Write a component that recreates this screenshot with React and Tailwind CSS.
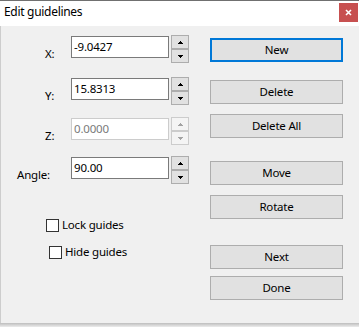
const font = "font-['Segoe_UI','Noto_Sans',sans-serif] text-[11.5px] leading-4 tracking-[-0.2px]";

const Arrow = ({ down, disabled }) => (
  <svg width="5" height="3" viewBox="0 0 5 3" shapeRendering="crispEdges" className={down ? "rotate-180" : ""}>
    <g fill={disabled ? "#a3a3a3" : "#000"}>
      <rect x="2" y="0" width="1" height="1" />
      <rect x="1" y="1" width="3" height="1" />
      <rect x="0" y="2" width="5" height="1" />
    </g>
  </svg>
);

const Spinner = ({ disabled }) => {
  const box = disabled
    ? "h-[14px] border border-[#cccccc] bg-[#f4f4f4] flex items-center justify-center"
    : "h-[14px] border border-[#adadad] bg-[#e1e1e1] flex items-center justify-center";
  return (
    <div className="flex flex-col w-[18px] ml-[2px]">
      <div className={box}>
        <Arrow disabled={disabled} />
      </div>
      <div className={box}>
        <Arrow down disabled={disabled} />
      </div>
    </div>
  );
};

const Field = ({ label, pad, value, disabled, top }) => (
  <div className={`flex items-start h-[28px] ${top}`}>
    <div className={`w-[70px] mt-[11px] text-black ${pad}`}>{label}</div>
    <div
      className={`w-[98px] h-[22px] mt-[1px] border bg-white pl-[2px] flex items-center ${
        disabled ? "border-[#cccccc] text-[#7a7a7a]" : "border-[#7a7a7a] text-black"
      }`}
    >
      {value}
    </div>
    <Spinner disabled={disabled} />
  </div>
);

const Button = ({ children, top, focus }) => (
  <div
    className={`h-[24px] flex items-center justify-center bg-[#e1e1e1] text-black ${top} ${
      focus ? "border-2 border-[#0078d7]" : "border border-[#adadad]"
    }`}
  >
    {children}
  </div>
);

const Check = ({ label, left, top }) => (
  <div className={`flex items-center ${left} ${top}`}>
    <div className="w-[13px] h-[13px] border border-[#333333] bg-white" />
    <span className="ml-[3px] text-black">{label}</span>
  </div>
);

export default function App() {
  return (
    <div className={`w-[359px] h-[327px] bg-white ${font}`}>
      <div className="h-[26px] bg-white border-t border-[#707070] flex items-start justify-between">
        <div className="pl-[4px] pt-[3px] text-[12px] tracking-[-0.3px] text-black">Edit guidelines</div>
        <div className="w-[19px] h-[19px] mt-[2px] mr-[1px] bg-[#c75050] flex items-center justify-center">
          <svg width="7" height="7" viewBox="0 0 7 7">
            <path d="M1 1 L6 6 M6 1 L1 6" stroke="#fff" strokeWidth="1.6" />
          </svg>
        </div>
      </div>
      <div className="h-[297px] bg-[#f0f0f0] border-l border-[#cdcdcd] flex">
        <div className="w-[209px] flex flex-col">
          <Field label="X:" pad="pl-[44px]" value="-9.0427" top="mt-[9px]" />
          <Field label="Y:" pad="pl-[44px]" value="15.8313" top="mt-[14px]" />
          <Field label="Z:" pad="pl-[44px]" value="0.0000" disabled top="mt-[12px]" />
          <Field label="Angle:" pad="pl-[16px]" value="90.00" top="mt-[11px]" />
          <Check label="Lock guides" left="ml-[45px]" top="mt-[33px]" />
          <Check label="Hide guides" left="ml-[48px]" top="mt-[11px]" />
        </div>
        <div className="w-[133px] flex flex-col">
          <Button focus top="mt-[12px]">New</Button>
          <Button top="mt-[18px]">Delete</Button>
          <Button top="mt-[10px]">Delete All</Button>
          <Button top="mt-[23px]">Move</Button>
          <Button top="mt-[10px]">Rotate</Button>
          <Button top="mt-[26px]">Next</Button>
          <Button top="mt-[7px]">Done</Button>
        </div>
      </div>
      <div className="h-[4px] bg-gradient-to-b from-[#bdbdbd] to-[#ececec]" />
    </div>
  );
}
